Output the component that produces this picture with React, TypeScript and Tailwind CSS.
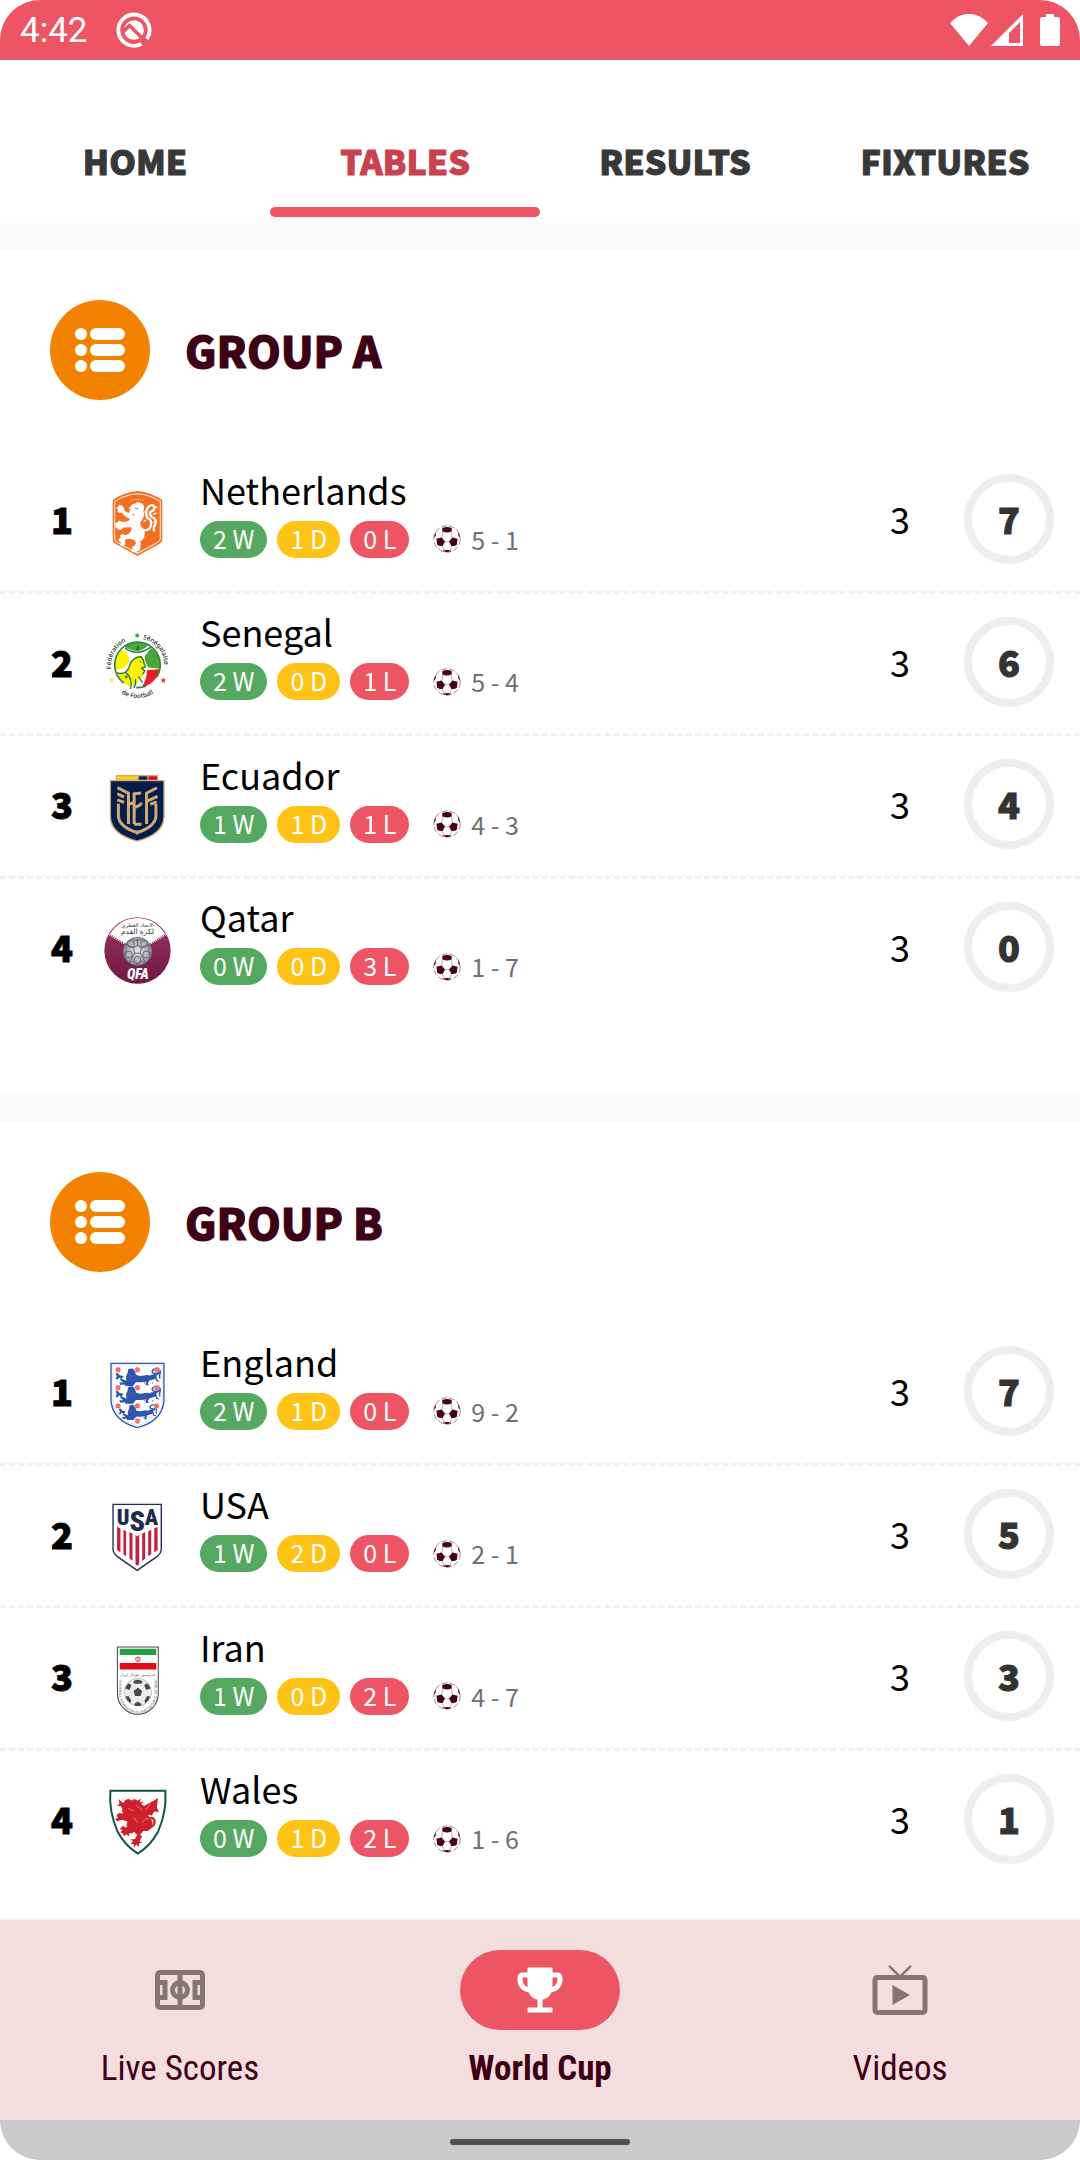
import type { ReactNode } from "react";
import { MdEmojiEvents, MdLiveTv } from "react-icons/md";

type Team = {
  name: string;
  crest: ReactNode;
  won: number;
  drawn: number;
  lost: number;
  goals: string;
  played: number;
  points: number;
};

/* ---------- Crests, all on a 200 x 200 canvas ---------- */

function Crest({ label, children }: { label: string; children: ReactNode }) {
  return (
    <svg viewBox="0 0 200 200" className="size-[67px] overflow-visible" role="img" aria-label={label}>
      {children}
    </svg>
  );
}

function NetherlandsCrest() {
  return (
    <Crest label="Netherlands crest">
      <path d="M100 3Q142 7 174 30V148Q173 158 162 163L100 197L38 163Q27 158 26 148V30Q58 7 100 3Z" fill="#f36f21" />
      <path d="M100 11Q138 14 168 34V146Q167 153 158 158L100 189L42 158Q33 153 32 146V34Q62 14 100 11Z" fill="none" stroke="#fdeee4" strokeWidth="3" />
      <path d="M80 31q20-6 40 0" fill="none" stroke="#fbc9a8" strokeWidth="4" strokeDasharray="3 4" />
      <path d="M86 42l8-2 6-4 8 2 8 4 4 8-2 12 2 12-4 12-8 10 2 12 8 8 4 12-2 14-6 8-6 4 2 8-2 10 0 8-8 2-2 6-6-4-6 2-6-6 6-4-4-6 8-2 6-10-4-8-12-4-12 0-6 4 2 10-4 8-8 0-5-5 4-6-7-4 0-8 6-2-2-8 7-4 8 3 10-2 8-10 2-10-12-1-14 2-6 6-8 0-4-5-6-3 2-6-3-6 7-2 6-6 8 4 12 0 10-4 2-6-10-4-10-8-4-6-7 2-6-4 2-6-5-6 6-3 2-6 8 2 6 6 2 10 10 6 6-1-2-6 6-3-8-3z" fill="#fff" />
      <path d="M110 120q26 4 30-14t-10-22q-8-14 0-30 8-12 16-8t2 14q-14 6-10 14t12 10q8 10 2 20t-2 20" fill="none" stroke="#fff" strokeWidth="7" strokeLinejoin="round" />
      <path d="M126 60l-4 6M152 50l6 2M148 72l8-3M150 96l7-4M124 90l-4 4" stroke="#fff" strokeWidth="4" strokeLinecap="round" />
      <path d="M92 54l10 3M84 72l8 3" stroke="#f36f21" strokeWidth="3" />
    </Crest>
  );
}

function SenegalCrest() {
  return (
    <Crest label="Senegal crest">
      <defs>
        <path id="sen-left" d="M22 110A79 79 0 0 1 92 21" />
        <path id="sen-right" d="M116 21A79 79 0 0 1 177 120" />
        <path id="sen-base" d="M30 166A95 95 0 0 0 170 166" />
        <clipPath id="sen-disc"><circle cx="100" cy="98" r="68" /></clipPath>
      </defs>
      <g clipPath="url(#sen-disc)">
        <path d="M20 66Q40 50 68 60L76 84Q66 108 44 112L20 112Z" fill="#fff200" />
        <path d="M30 120L66 124Q84 138 84 172L30 172Z" fill="#fff200" />
        <path d="M60 24L144 24Q130 50 100 58Q74 52 60 44Z" fill="#4aa637" />
        <path d="M140 48L176 70V110L132 106Q120 86 122 72Z" fill="#4aa637" />
        <path d="M128 114L176 110L150 160L114 162Q128 140 128 114Z" fill="#ec1c24" />
        <path d="M100 72Q118 70 120 84L124 102 116 108 124 120 114 134Q104 136 100 150L88 166Q84 138 68 124Q76 86 100 72Z" fill="#fff200" />
      </g>
      <circle cx="100" cy="98" r="68" fill="none" stroke="#2f8546" strokeWidth="5" strokeDasharray="320 40 30 40" strokeDashoffset="-150" />
      <path d="M64 49Q100 74 138 46M40 122Q66 130 76 102Q84 74 112 74M66 122Q86 138 80 168M94 142Q96 156 90 166M104 134l10 16M112 76q8 8 6 14l6 14-12 4 10 8-6 8" fill="none" stroke="#1f7a45" strokeWidth="4" strokeLinecap="round" strokeLinejoin="round" />
      <path d="M97 52l5-10 2 10zM66 128v12M60 134h12M106 88l6 2" fill="#1d6b3a" stroke="#1d6b3a" strokeWidth="2.5" />
      <path d="M100 2l2 5 5 1-4 4 1 6-5-3-5 3 1-6-4-4 6-1z" fill="#3fa34d" />
      <path d="M23 136l2 5 5 1-4 4 1 6-5-3-5 3 1-6-4-4 6-1z" fill="#fbe94d" />
      <path d="M178 136l2 5 5 1-4 4 1 6-5-3-5 3 1-6-4-4 6-1z" fill="#ee3a43" />
      <g fill="#222" fontFamily="'Noto Sans', sans-serif" fontWeight="500" fontSize="19">
        <text><textPath href="#sen-left" startOffset="0">Fédération</textPath></text>
        <text><textPath href="#sen-right" startOffset="0">Sénégalaise</textPath></text>
        <text><textPath href="#sen-base" startOffset="50%" textAnchor="middle">de Football</textPath></text>
      </g>
    </Crest>
  );
}

function EcuadorCrest() {
  return (
    <Crest label="Ecuador crest">
      <path d="M35 0H162V18H35Z" fill="#cfa873" />
      <path d="M39 4H100V14H39Z" fill="#fdd116" />
      <path d="M104 4H129V14H104Z" fill="#0a1f56" />
      <path d="M133 4H158V14H133Z" fill="#e4002b" />
      <path d="M17 15H181V124Q180 180 99 199Q18 180 17 124Z" fill="#cfa873" />
      <path d="M21 19H177V124Q175 176 99 195Q23 176 21 124Z" fill="#031d4d" />
      <g fill="none" stroke="#d3aa72" strokeWidth="9">
        <path d="M43 86V124Q46 154 99 172Q152 154 155 124V86" />
        <path d="M40 38L73 54V146M40 56L60 66M40 74L60 82" />
        <path d="M158 38L127 54V146M160 64L129 78M157 80L138 88" />
        <path d="M73 88L93 80M90 146V56L111 54M111 88L90 98M111 88V82M90 147H112" />
      </g>
      <path d="M88 166L99 180L110 166" fill="#d3aa72" />
    </Crest>
  );
}

function QatarCrest() {
  return (
    <Crest label="Qatar crest">
      <defs>
        <clipPath id="qat-disc"><circle cx="100" cy="100" r="98" /></clipPath>
        <linearGradient id="qat-fill" x1="0" y1="0" x2="0" y2="1">
          <stop offset="0" stopColor="#9a3567" />
          <stop offset="1" stopColor="#6f1740" />
        </linearGradient>
        <radialGradient id="qat-ball">
          <stop offset="0" stopColor="#e5e5ea" />
          <stop offset="1" stopColor="#9b9ba4" />
        </radialGradient>
      </defs>
      <circle cx="100" cy="100" r="99" fill="url(#qat-fill)" />
      <g clipPath="url(#qat-disc)">
        <path d="M100 3Q48 4 18 50L62 78H138L182 50Q152 4 100 3Z" fill="#fff" />
        <path d="M16 52L62 80M184 52L138 80" stroke="#fff" strokeWidth="6" strokeDasharray="3 3" />
      </g>
      <g fill="#333" fontFamily="'DejaVu Sans', sans-serif" textAnchor="middle">
        <text x="100" y="31" fontSize="16">الاتحاد القطري</text>
        <text x="100" y="51" fontSize="22">لكرة القدم</text>
      </g>
      <circle cx="100" cy="102" r="42" fill="url(#qat-ball)" stroke="#77777f" strokeWidth="2" />
      <g fill="none" stroke="#6a6a73" strokeWidth="3">
        <path d="M88 92L100 84 112 92 108 108H92ZM100 84V62M112 92L134 82M108 108L122 132M92 108L78 132M88 92L66 82" />
        <path d="M84 66Q100 74 116 66M136 80Q130 100 140 112M124 134Q108 128 100 142Q92 128 76 134M60 112Q70 100 64 80" />
        <circle cx="80" cy="80" r="10" /><circle cx="120" cy="80" r="10" /><circle cx="126" cy="112" r="10" /><circle cx="74" cy="112" r="10" /><circle cx="100" cy="128" r="10" />
      </g>
      <text x="101" y="185" textAnchor="middle" fill="#fff" fontFamily="'Roboto Condensed', Roboto, sans-serif" fontWeight="900" fontStyle="italic" fontSize="42">QFA</text>
    </Crest>
  );
}

function Lion() {
  return (
    <>
      <path d="M46 3q8-6 18-2l7 9 2 10q14 6 28 2t24 2q10-8 20-4l2 14 8 8-10-1-4-9-8 4-12 2-6 10 4 6H107l2-12q-18 2-36 2l-10 12H36l-2-5-16 2-3-8 14 0-11-8 1-7 9 5 12 4q-4-14 4-24zM30 24l-14-3-8-8-6 2 4 10-4 8 6 3 6-7 10 3z" fill="#2b57b0" />
      <path d="M124 22q30-2 30-10-18 8-24-2 2-12 22-10 10 8 6 16t0 16" fill="none" stroke="#2b57b0" strokeWidth="5" />
      <path d="M53 22l7 0-3 9z" fill="#e5303a" />
      <circle cx="5" cy="16" r="2" fill="#e5303a" /><circle cx="104" cy="46" r="2" fill="#e5303a" /><circle cx="132" cy="46" r="2" fill="#e5303a" /><circle cx="154" cy="40" r="2" fill="#e5303a" />
    </>
  );
}

function EnglandCrest() {
  const roses = [[42, 23], [100, 23], [158, 23], [42, 77], [100, 77], [157, 77], [42, 131], [100, 131], [157, 131], [100, 176]];
  return (
    <Crest label="England crest">
      <path d="M21 4H179V116Q174 176 100 196Q26 176 21 116Z" fill="#fff" stroke="#2b57b0" strokeWidth="4" />
      <path d="M26 9H174V116Q169 170 100 190Q31 170 26 116Z" fill="none" stroke="#b9cbea" strokeWidth="1.5" />
      <g transform="translate(33 20) scale(0.85 0.92)"><Lion /></g>
      <g transform="translate(33 73) scale(0.85 0.92)"><Lion /></g>
      <g transform="translate(43 128) scale(0.72 0.8)"><Lion /></g>
      {roses.map(([x, y]) => (
        <g key={`${x}-${y}`}>
          <circle cx={x} cy={y} r="8" fill="#ee3f46" stroke="#fff" strokeWidth="1.5" />
          <circle cx={x} cy={y} r="3.5" fill="none" stroke="#fff" strokeWidth="2" strokeDasharray="3 1.5" />
        </g>
      ))}
    </Crest>
  );
}

function UsaCrest() {
  return (
    <Crest label="USA crest">
      <path d="M27 1H171V136Q170 148 158 157L99 198L40 157Q28 148 27 136Z" fill="#fff" stroke="#1f2a4d" strokeWidth="4" />
      <g fill="#1f2a4d" fontFamily="'Roboto Condensed', Roboto, sans-serif" fontWeight="900" textAnchor="middle">
        <text x="57" y="62" fontSize="66">U</text>
        <text x="99" y="80" fontSize="84">S</text>
        <text x="142" y="62" fontSize="66">A</text>
      </g>
      <g fill="#c1203f">
        <path d="M39 68l10 5v72l-10-8zM58 77l8 4v75l-8-6zM76 84l9 4v82l-9-7zM94 92l5 5 6-5v88l-6 4-5-4zM114 88l9-4v79l-9 7zM132 81l9-4v73l-9 6zM150 73l10-5v69l-10 8z" />
      </g>
    </Crest>
  );
}

function IranCrest() {
  return (
    <Crest label="Iran crest">
      <defs><path id="iran-arc" d="M44 100V138A57 60 0 0 0 158 138V100" /></defs>
      <path d="M40 0H162V138A61 63 0 0 1 40 138Z" fill="#fff" stroke="#444" strokeWidth="3" />
      <path d="M47 5H156V24H47Z" fill="#259f45" />
      <path d="M47 48H156V67H47Z" fill="#e30c17" />
      <path d="M94 36q3-7 7-5 4-2 7 5-1 7-7 8-6-1-7-8zM101 29v15" fill="none" stroke="#e8505a" strokeWidth="3" />
      <text x="101" y="87" textAnchor="middle" fill="#555" fontFamily="'DejaVu Sans', sans-serif" fontSize="11">فدراسیون فوتبال ایران</text>
      <circle cx="101" cy="135" r="41" fill="#ececec" stroke="#aaa" strokeWidth="2" />
      <g fill="#484848">
        <path d="M88 131l13-9 13 9-5 15H93zM87 102q14-9 28 0l-4 8H91zM63 124q4-12 11-16l8 6-6 14zM139 124q-4-12-11-16l-8 6 6 14zM64 148l9-2 8 14-2 8q-12-8-15-20zM138 148l-9-2-8 14 2 8q12-8 15-20zM90 170l11-7 11 7-3 6H93z" />
      </g>
      <text fill="#666" fontFamily="'DejaVu Sans', sans-serif" fontSize="10"><textPath href="#iran-arc">FOOTBALL FEDERATION ISLAMIC REPUBLIC OF IRAN</textPath></text>
    </Crest>
  );
}

function WalesCrest() {
  return (
    <Crest label="Wales crest">
      <path d="M19 5H183Q188 66 162 126Q140 168 101 193Q62 168 40 126Q14 66 19 5Z" fill="#fff" stroke="#17544a" strokeWidth="6" />
      <g fill="#ce1f2c">
        <path d="M62 34l10-5 10 5 8-4 10 4 12-5-6 8 12 3-8 5 10 6 12-8 20-10 9-8-3 30 6 14-14-2-7 12-12-2 8 10 6 12-2 16-12 10-14 0-8 10-4 14-8 2 2-14-10-10-14-6-8-12 3-12-16-5-14 4-7-6 10-5 2-8 12-4-4-9 6-8z" />
        <path d="M44 30l12 12 6-5 4 14 10 4-6 10-14-4-6-10-12 0 8-6zM45 72l-8 6 6 10 14 4 14-6-2-10zM56 110l8 5 10-4 20 10-10 12-8-2-2 10-7-6-8 6-2-8-8-3 6-8-8-2zM92 150l8-14 14 4-8 16 8 4-9 2-2 12-6-8-8 8 0-10-10 0 8-8-9-6z" />
      </g>
      <path d="M132 90q12-8 18 2 4 14-8 20-14 2-15-8 2-7 9-5" fill="none" stroke="#ce1f2c" strokeWidth="7" strokeLinecap="round" />
      <path d="M112 100q10-14 24-12M72 58l18 8M96 48l18 16M88 84l12 16M138 42l-12 20" fill="none" stroke="#fff" strokeOpacity=".6" strokeWidth="2" />
    </Crest>
  );
}

/* ---------- Small icons ---------- */

function BallIcon() {
  return (
    <svg viewBox="0 0 28 28" className="size-7" aria-hidden="true">
      <circle cx="14" cy="14" r="13.200" fill="#fff" stroke="#4a0014" strokeOpacity=".6" strokeWidth=".8" strokeDasharray="6 2" />
      <g fill="#4a0014">
        <path d="M9.400 3Q14 .8 18.600 3L18.800 6.200Q14 9 9.200 6.200ZM3.400 13.800L8.600 12.400L12 16.600L9.600 21Q6 21.400 4.200 19.800ZM24.600 13.800L19.400 12.400L16 16.600L18.400 21Q22 21.400 23.800 19.800ZM9.600 25.800Q14 24.400 18.400 25.800Q14 28.200 9.600 25.800ZM.8 12.500Q1.200 9 3 7L2.600 11ZM27.200 12.500Q26.800 9 25 7L25.400 11Z" />
      </g>
      <path d="M11.600 16.800H16.400M9.600 6.500L8.800 12.800M18.400 6.500L19.200 12.800M9.400 21L11 25.500M18.600 21L17 25.500" stroke="#4a0014" strokeOpacity=".4" strokeWidth=".8" />
    </svg>
  );
}

function ListIcon() {
  return (
    <svg viewBox="0 0 50 46" className="h-[46px] w-[50px]" fill="#fff" aria-hidden="true">
      {[7, 23, 39].map((y) => (
        <g key={y}>
          <circle cx="6" cy={y} r="6" />
          <rect x="15" y={y - 6} width="35" height="12" rx="6" />
        </g>
      ))}
    </svg>
  );
}

function FieldIcon() {
  return (
    <svg viewBox="0 0 24 24" className="size-[60px]" fill="none" stroke="currentColor" strokeWidth="2" aria-hidden="true">
      <rect x="3" y="5" width="18" height="14" rx="1" />
      <path d="M12 5v14M3 9h3v6H3M21 9h-3v6h3" />
      <circle cx="12" cy="12" r="3" />
    </svg>
  );
}

function StatusBar() {
  return (
    <div className="flex h-[60px] shrink-0 items-center bg-[#ed5565] pr-5 pl-5 text-white">
      <span className="pt-[2px] font-[Roboto,sans-serif] text-[35px] leading-[42px]">4:42</span>
      <svg viewBox="0 0 36 36" className="ml-7 size-9" aria-hidden="true">
        <path d="M25.500 31.800A15.600 15.600 0 1 1 30.800 27" fill="none" stroke="#fff" strokeWidth="3.800" />
        <circle cx="18" cy="18" r="9.800" fill="#fff" />
        <path d="M7 20L13.500 13.500L29 29" fill="none" stroke="#ed5565" strokeWidth="3.600" />
      </svg>
      <div className="ml-auto flex items-center">
        <svg viewBox="0 0 38 32" className="h-8 w-[38px]" aria-hidden="true">
          <path d="M0 9Q8 0 19 0T38 9L19 32Z" fill="#fff" />
        </svg>
        <svg viewBox="0 0 32 32" className="ml-[3px] size-8" aria-hidden="true">
          <path fillRule="evenodd" d="M32 0V32H0ZM29 8L18 19V29H29Z" fill="#fff" />
        </svg>
        <svg viewBox="0 0 20 32" className="ml-[17px] h-8 w-5" aria-hidden="true">
          <path d="M6 0H14V3H18Q20 3 20 5V30Q20 32 18 32H2Q0 32 0 30V5Q0 3 2 3H6Z" fill="#fff" />
        </svg>
      </div>
    </div>
  );
}

const tabs = ["HOME", "TABLES", "RESULTS", "FIXTURES"];

function Tabs() {
  return (
    <nav className="grid shrink-0 grid-cols-4 bg-white pt-[77px]" aria-label="Sections">
      {tabs.map((tab) => {
        const active = tab === "TABLES";
        return (
          <button key={tab} type="button" aria-current={active ? "page" : undefined} className={`flex flex-col items-center text-[34px] leading-[48px] font-black [-webkit-text-stroke:1px] ${active ? "text-[#c8414f]" : "text-[#383838]"}`}>
            {tab}
            <span className={`mt-[22px] h-[10px] w-full rounded-full ${active ? "bg-[#ed5565]" : ""}`} />
          </button>
        );
      })}
    </nav>
  );
}

function TeamRow({ team, rank }: { team: Team; rank: number }) {
  return (
    <tr className="flex items-center border-b-[3px] border-dashed border-[#f1f1f1] pb-[3px] last:border-transparent">
      <th scope="row" className="ml-10 w-11 pb-[2px] text-center text-[36px] leading-[48px] font-black [-webkit-text-stroke:1px]">{rank}</th>
      <td className="ml-5 pt-2">{team.crest}</td>
      <td className="ml-[29px] flex-1 pb-4">
        <div className="text-[36px] leading-[48px]">{team.name}</div>
        <div className="mt-2 flex items-center text-[25px] leading-[35px] text-white">
          <span className="rounded-full bg-[#55a860] px-[13px] pb-[2px]">{team.won} W</span>
          <span className="ml-[10px] rounded-full bg-[#ffc316] px-[13px] pb-[2px]">{team.drawn} D</span>
          <span className="ml-[10px] rounded-full bg-[#ed5565] px-[13px] pb-[2px]">{team.lost} L</span>
          <span className="ml-6 flex items-center gap-[10px] text-[#707070]">
            <BallIcon />
            {team.goals}
          </span>
        </div>
      </td>
      <td className="mr-6 w-20 pb-[2px] text-center text-[36px] leading-[48px]">{team.played}</td>
      <td className="mr-[26px] flex size-[90px] items-center justify-center rounded-full border-8 border-[#eee] pb-[2px] text-[36px] leading-[48px] font-black text-[#333] [-webkit-text-stroke:1px]">
        {team.points}
      </td>
    </tr>
  );
}

function Group({ title, teams }: { title: string; teams: Team[] }) {
  const id = title.toLowerCase().replace(" ", "-");
  return (
    <section className="bg-white pt-[50px] pb-[71px]">
      <header className="mb-[51px] flex items-center gap-[35px] px-[50px]">
        <span className="flex size-[100px] items-center justify-center rounded-full bg-[#f38200]">
          <ListIcon />
        </span>
        <h2 id={id} className="pb-[2px] text-[43px] leading-[60px] font-black text-[#3d0014] [-webkit-text-stroke:1px]">{title}</h2>
      </header>
      <table className="block" aria-labelledby={id}>
        <tbody className="grid min-h-[570px] auto-rows-fr">
          {teams.map((team, i) => (
            <TeamRow key={team.name} team={team} rank={i + 1} />
          ))}
        </tbody>
      </table>
    </section>
  );
}

const groupA: Team[] = [
  { name: "Netherlands", crest: <NetherlandsCrest />, won: 2, drawn: 1, lost: 0, goals: "5 - 1", played: 3, points: 7 },
  { name: "Senegal", crest: <SenegalCrest />, won: 2, drawn: 0, lost: 1, goals: "5 - 4", played: 3, points: 6 },
  { name: "Ecuador", crest: <EcuadorCrest />, won: 1, drawn: 1, lost: 1, goals: "4 - 3", played: 3, points: 4 },
  { name: "Qatar", crest: <QatarCrest />, won: 0, drawn: 0, lost: 3, goals: "1 - 7", played: 3, points: 0 },
];

const groupB: Team[] = [
  { name: "England", crest: <EnglandCrest />, won: 2, drawn: 1, lost: 0, goals: "9 - 2", played: 3, points: 7 },
  { name: "USA", crest: <UsaCrest />, won: 1, drawn: 2, lost: 0, goals: "2 - 1", played: 3, points: 5 },
  { name: "Iran", crest: <IranCrest />, won: 1, drawn: 0, lost: 2, goals: "4 - 7", played: 3, points: 3 },
  { name: "Wales", crest: <WalesCrest />, won: 0, drawn: 1, lost: 2, goals: "1 - 6", played: 3, points: 1 },
];

const destinations = [
  { label: "Live Scores", icon: <FieldIcon />, active: false },
  { label: "World Cup", icon: <MdEmojiEvents className="size-[60px]" />, active: true },
  { label: "Videos", icon: <MdLiveTv className="size-[60px]" />, active: false },
];

function BottomNav() {
  return (
    <nav className="grid shrink-0 grid-cols-3 bg-[#f3dddf] pt-[30px] pb-[28px] shadow-[0_0_3px_rgba(0,0,0,0.12)]" aria-label="Main">
      {destinations.map(({ label, icon, active }) => (
        <button key={label} type="button" aria-current={active ? "page" : undefined} className="flex flex-col items-center gap-4">
          <span className={`flex h-20 w-40 items-center justify-center rounded-full ${active ? "bg-[#ed5565] text-white" : "text-[#857575]"}`}>{icon}</span>
          <span className={`font-['Roboto_Condensed',Roboto,sans-serif] text-[35px] leading-[46px] text-[#3d0014] ${active ? "font-bold" : ""}`}>{label}</span>
        </button>
      ))}
    </nav>
  );
}

export default function App() {
  return (
    <div className="flex h-screen flex-col overflow-hidden rounded-[40px] bg-[#fbf9fa] font-['Noto_Sans_CJK_SC',sans-serif] text-black">
      <StatusBar />
      <Tabs />
      <main className="flex min-h-0 flex-1 flex-col gap-[30px] overflow-y-auto pt-[33px] [scrollbar-width:none]">
        <Group title="GROUP A" teams={groupA} />
        <Group title="GROUP B" teams={groupB} />
      </main>
      <BottomNav />
      <div className="flex h-10 shrink-0 items-center justify-center bg-[#cbc9cc]">
        <div className="mt-1 h-[6px] w-[180px] rounded-full bg-[#525053]" />
      </div>
    </div>
  );
}
